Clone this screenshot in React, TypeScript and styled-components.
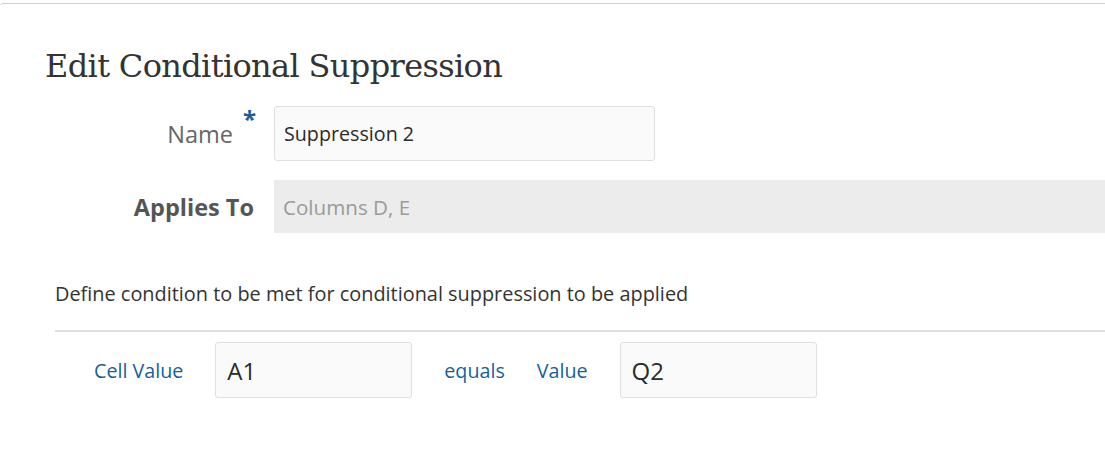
import React, { FC } from 'react';
import styled, { createGlobalStyle } from 'styled-components';

const BLUE = '#155f9c';
const SANS = '"Open Sans", "Noto Sans", sans-serif';

const GlobalStyle = createGlobalStyle`
  html, body {
    margin: 0;
    padding: 0;
    background: #fff;
    overflow: hidden;
  }
  body {
    font-family: ${SANS};
  }
`;

const Page = styled.div`
  padding-top: 3px;
  width: 1105px;
  height: 467px;
  box-sizing: border-box;
`;

const Panel = styled.section`
  border-top: 1px solid #cfcfcf;
  border-top-left-radius: 3px;
`;

const Title = styled.h1`
  margin: 0;
  padding: 40px 0 0 45px;
  font-family: "DejaVu Serif", "Liberation Serif", serif;
  font-weight: 400;
  font-size: 32px;
  line-height: 44px;
  letter-spacing: -0.65px;
  color: #333;
`;

const Form = styled.div`
  display: grid;
  grid-template-columns: 256px 1fr;
  column-gap: 18px;
  row-gap: 19px;
  margin-top: 18px;
`;

const Label = styled.div<{ $bold?: boolean }>`
  display: flex;
  align-items: center;
  justify-content: flex-end;
  font-size: 23.5px;
  font-weight: ${(p) => (p.$bold ? 700 : 400)};
  color: ${(p) => (p.$bold ? '#555' : '#666')};
  padding-right: ${(p) => (p.$bold ? '2px' : '0')};
`;

const Required = styled.span`
  align-self: flex-start;
  margin-left: 10px;
  margin-top: 1px;
  width: 13px;
  color: ${BLUE};
  font-size: 24px;
  line-height: 24px;
  font-weight: 700;
`;

const TextBox = styled.div<{ $width?: number; $height: number; $big?: boolean }>`
  box-sizing: border-box;
  width: ${(p) => (p.$width ? `${p.$width}px` : 'auto')};
  height: ${(p) => p.$height}px;
  display: flex;
  align-items: center;
  padding-left: ${(p) => (p.$big ? 11 : 9)}px;
  background: #fafafa;
  border: 1px solid #dfdfdf;
  border-radius: 3px;
  font-size: ${(p) => (p.$big ? 24 : 19.7)}px;
  color: #2b2b2b;
`;

const ReadOnlyBox = styled.div`
  box-sizing: border-box;
  height: 53px;
  display: flex;
  align-items: center;
  padding-left: 9px;
  background: #ececec;
  font-size: 20.6px;
  color: #9a9a9a;
`;

const Condition = styled.div`
  padding-left: 55px;
  margin-top: 47px;
`;

const Hint = styled.p`
  margin: 0;
  font-size: 19.9px;
  line-height: 28px;
  color: #333;
`;

const Divider = styled.hr`
  margin: 22px 0 0;
  border: 0;
  border-top: 2px solid #dedede;
`;

const CriteriaRow = styled.div`
  display: flex;
  align-items: center;
  gap: 32px;
  margin-top: 10px;
  padding-left: 39px;
`;

const Link = styled.span`
  font-size: 19.7px;
  color: ${BLUE};
`;

const App: FC = () => {
  return (
    <>
      <GlobalStyle />
      <Page>
        <Panel>
          <Title>Edit Conditional Suppression</Title>
          <Form>
            <Label>
              Name
              <Required>*</Required>
            </Label>
            <TextBox $width={381} $height={55}>Suppression 2</TextBox>
            <Label $bold>Applies To</Label>
            <ReadOnlyBox>Columns D, E</ReadOnlyBox>
          </Form>
          <Condition>
            <Hint>Define condition to be met for conditional suppression to be applied</Hint>
            <Divider />
            <CriteriaRow>
              <Link>Cell Value</Link>
              <TextBox $width={197} $height={56} $big>A1</TextBox>
              <Link>equals</Link>
              <Link>Value</Link>
              <TextBox $width={197} $height={56} $big>Q2</TextBox>
            </CriteriaRow>
          </Condition>
        </Panel>
      </Page>
    </>
  );
};

export default App;
